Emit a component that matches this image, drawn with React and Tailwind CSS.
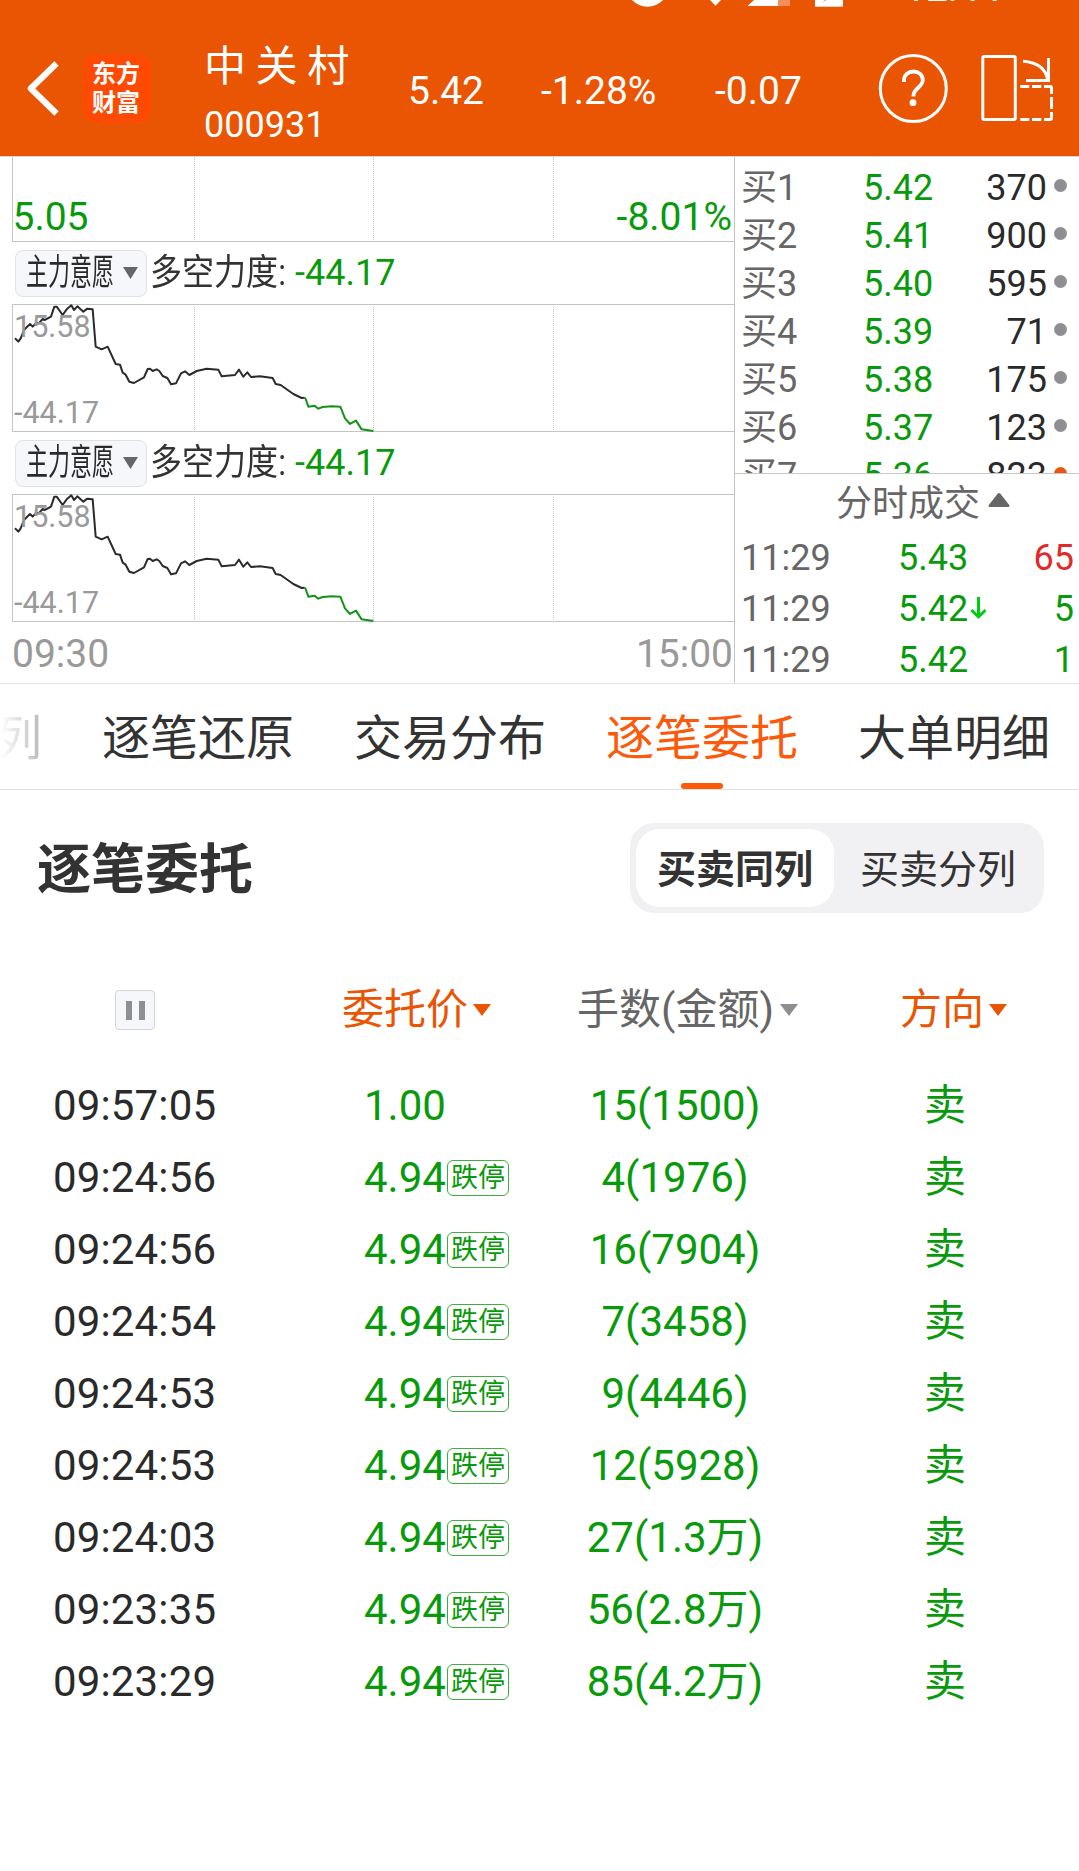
import React from "react";

const bids = [
  ["买1", "5.42", "370"],
  ["买2", "5.41", "900"],
  ["买3", "5.40", "595"],
  ["买4", "5.39", "71"],
  ["买5", "5.38", "175"],
  ["买6", "5.37", "123"],
  ["买7", "5.36", "823", true],
];

const ticks = [
  { time: "11:29", price: "5.43", vol: "65", up: true },
  { time: "11:29", price: "5.42", vol: "5", arrow: true },
  { time: "11:29", price: "5.42", vol: "1" },
];

const orders = [
  ["09:57:05", "1.00", "15(1500)", false],
  ["09:24:56", "4.94", "4(1976)", true],
  ["09:24:56", "4.94", "16(7904)", true],
  ["09:24:54", "4.94", "7(3458)", true],
  ["09:24:53", "4.94", "9(4446)", true],
  ["09:24:53", "4.94", "12(5928)", true],
  ["09:24:03", "4.94", "27(1.3万)", true],
  ["09:23:35", "4.94", "56(2.8万)", true],
  ["09:23:29", "4.94", "85(4.2万)", true],
];

const darkLine =
  "45,565 55,575 62,565 72,540 80,532 90,522 98,530 108,520 118,518 128,507 135,510 153,500 163,470 170,470 188,495 200,478 214,466 222,480 232,469 250,485 262,476 278,478 287,590 305,598 323,590 347,642 360,644 368,668 377,674 388,695 402,699 432,682 443,657 450,656 458,663 470,658 478,663 488,678 502,684 513,703 528,700 543,670 555,664 568,675 590,663 620,656 655,659 665,679 705,675 717,659 730,680 742,667 753,681 780,679 818,684 827,702 842,705 880,732 905,744 914,743";
const greenLine =
  "914,743 917,747 925,770 944,767 955,776 968,771 995,769 1021,770 1035,805 1050,822 1068,812 1085,838 1120,843";

function GridLines({ height, from }) {
  return [182.5, 361.5, 541.5].map((x) => (
    <line key={x} x1={x} x2={x} y1={from} y2={height - 1} stroke="#c4c4c4" strokeWidth="1" strokeDasharray="1 1" />
  ));
}

function StatusBar() {
  return (
    <div className="relative h-[8px] shrink-0 overflow-hidden">
      <svg className="block" width="1079" height="8" viewBox="0 0 1079 8" fill="#fff">
        <circle cx="647.5" cy="-15" r="21.7" />
        <path d="M710 0h11l-5.500 5.700z" />
        <path d="M754 0h24v6h-30.500z" />
        <path d="M778 0h12v6h-12z" opacity=".35" />
        <path d="M815 0h28v6.700h-28z" />
        <path d="M822 2l3-2h1.500z" fill="#ea5504" />
      </svg>
      <span className="absolute left-[904px] top-[-36px] text-[39px] leading-[48px] text-white">12:44</span>
    </div>
  );
}

function Header() {
  return (
    <header className="flex h-[156px] flex-col bg-[#ea5504] text-white">
      <StatusBar />
      <div className="flex h-[148px] items-start">
        <svg className="ml-[24px] mt-[50px] shrink-0" width="38" height="62" viewBox="0 0 38 62" fill="none" stroke="#fff" strokeWidth="6.200" strokeLinejoin="round">
          <path d="M32.500 5.500L6.800 30.500l25.700 25" />
        </svg>
        <div className="ml-[21px] mt-[46px] flex h-[69px] w-[68px] shrink-0 flex-col items-center justify-center rounded-[14px] bg-[#ff4a03] pr-[2px] text-[24px] font-bold leading-[29px]">
          <span>东方</span>
          <span>财富</span>
        </div>
        <div className="ml-[53px] mt-[32px] w-[204px] shrink-0">
          <div className="whitespace-pre text-[42px] leading-[54px] [word-spacing:-0.8px]">中 关 村</div>
          <div className="mt-[7px] text-[36px] leading-[48px]">000931</div>
        </div>
        <div className="mt-[59px] flex shrink-0 text-[39px] leading-[48px]">
          <span className="w-[133px]">5.42</span>
          <span className="w-[174px]">-1.28%</span>
          <span className="w-[162px]">-0.07</span>
        </div>
        <svg className="mt-[45px] shrink-0" width="72" height="72" viewBox="877 53 72 72" fill="none" stroke="#fff">
          <circle cx="913.300" cy="88.500" r="33" strokeWidth="3" />
          <path d="M904 82v-1.500c0-5.500 4.200-9 9.500-9s9.300 3.500 9.300 8.500c0 7-9.300 8.500-9.300 15.500v1" strokeWidth="3.800" />
          <circle cx="913" cy="102.700" r="3.400" fill="#fff" stroke="none" />
        </svg>
        <svg className="ml-[31px] mt-[45px] shrink-0" width="76" height="72" viewBox="981 53 76 72" fill="none" stroke="#fff" strokeWidth="3">
          <rect x="983.800" y="56.500" width="32.500" height="63" rx="1.500" />
          <path d="M1021.300 86.500h9M1033 86.500h9.300M1045 86.500h6q1.500 0 1.500 1.500v6M1052.500 97v12M1052.500 112v6q0 1.500-1.500 1.500h-6M1042.300 119.500h-9.300M1030.300 119.500h-9" />
          <path d="M1024 61.200c14 1 23.500 7.500 24.500 19M1049.500 58v23.800M1027 80.500h24" />
        </svg>
      </div>
    </header>
  );
}

function Indicator() {
  return (
    <>
      <div className="flex h-[62px] items-center">
        <div className="ml-[3px] flex h-[47px] w-[132px] shrink-0 items-center rounded-[8px] border border-[#e0e2e6] bg-[#f6f7fa]">
          <span className="ml-[10px] w-[89px] origin-left scale-x-[0.61] whitespace-nowrap text-[36px] leading-[46px] text-[#2a2a2a]">主力意愿</span>
          <svg className="ml-[8px]" width="15" height="12" viewBox="0 0 15 12" fill="#666">
            <path d="M0 0h15L7.500 12z" />
          </svg>
        </div>
        <span className="ml-[3px] w-[144px] shrink-0 origin-left scale-x-[0.89] whitespace-nowrap text-[36px] leading-[46px] text-[#333]">多空力度:</span>
        <span className="ml-[1px] text-[36px] leading-[46px] text-[#099a0c]">-44.17</span>
      </div>
      <div className="relative h-[128px]">
        <svg className="block overflow-visible" width="722" height="128" viewBox="0 0 722 128" fill="none">
          <path d="M722 .5H.5v127H722" stroke="#c4c4c4" />
          <GridLines height={128} from={3} />
          <g transform="translate(-12 -154) scale(.33333)" strokeWidth="6" strokeLinejoin="round">
            <polyline points={darkLine} stroke="#2b2b2b" />
            <polyline points={greenLine} stroke="#15911a" />
          </g>
        </svg>
        <span className="absolute left-[2px] top-[4px] text-[30.5px] leading-[38px] text-[#999]">15.58</span>
        <span className="absolute left-[2px] top-[90px] text-[30.5px] leading-[38px] text-[#999]">-44.17</span>
      </div>
    </>
  );
}

function ChartPanel() {
  return (
    <div className="w-[734px] shrink-0 pl-[12px]">
      <div className="relative h-[85px]">
        <svg className="block" width="722" height="85" viewBox="0 0 722 85" fill="none">
          <path d="M.5 0v84.500H722" stroke="#c4c4c4" />
          <GridLines height={85} from={0} />
        </svg>
        <div className="absolute inset-x-0 top-[36px] flex justify-between pl-[0.5px] pr-[2px] text-[39px] leading-[48px] text-[#099a0c]">
          <span>5.05</span>
          <span>-8.01%</span>
        </div>
      </div>
      <Indicator />
      <Indicator />
      <div className="flex h-[61px] justify-between pr-[1px] pt-[8px] text-[39px] leading-[48px] text-[#999]">
        <span>09:30</span>
        <span>15:00</span>
      </div>
    </div>
  );
}

function QuotePanel() {
  return (
    <div className="flex-1 border-l border-[#c4c4c4] text-[36px]">
      <div className="h-[317px] overflow-hidden border-b border-[#c8c8c8] pt-[7px]">
        {bids.map(([name, price, vol, hot]) => (
          <div key={name} className="flex h-[48px] items-center leading-[48px]">
            <span className="ml-[6px] w-[122px] text-[#666]">{name}</span>
            <span className="w-[90px] text-[#099a0c]">{price}</span>
            <span className="w-[94px] text-right text-[#2a2a2a]">{vol}</span>
            <span className={hot ? "mb-[6px] ml-[7px] size-[13px] rounded-full bg-[#e8560f]" : "mb-[6px] ml-[7px] size-[13px] rounded-full bg-[#8e8e93]"} />
          </div>
        ))}
      </div>
      <div className="flex h-[58px] items-center pl-[101px] leading-[58px] text-[#666]">
        <span className="pt-[2px]">分时成交</span>
        <svg className="mb-[7px] ml-[8px]" width="22" height="14" viewBox="0 0 22 14" fill="#666">
          <path d="M9.800 .6q1.200-1.200 2.400 0L21.200 12q.8 2-1 2H1.800q-1.800 0-1-2z" />
        </svg>
      </div>
      <div className="pt-[1px]">
        {ticks.map((t, i) => (
          <div key={i} className="flex h-[51px] items-center leading-[51px] text-[#099a0c]">
            <span className="ml-[6px] w-[157px] text-[#666]">{t.time}</span>
            <span className="w-[72px]">{t.price}</span>
            <span className="w-[17px]">
              {t.arrow && (
                <svg className="mb-[4px]" width="17" height="24" viewBox="0 0 17 24" fill="none" stroke="#00cc10" strokeWidth="3">
                  <path d="M8.500 1v20M1.500 14l7 7 7-7" />
                </svg>
              )}
            </span>
            <span className={t.up ? "w-[87px] text-right text-[#e02b2b]" : "w-[87px] text-right"}>{t.vol}</span>
          </div>
        ))}
      </div>
    </div>
  );
}

function Tabs() {
  return (
    <nav className="flex h-[106px] justify-end gap-[60px] overflow-hidden border-b border-[#e2e2e2] pr-[29px] text-[48px] leading-[110px] text-[#333]">
      <span className="shrink-0 bg-linear-to-r from-[#fff] from-15% to-[#b8b8b8] bg-clip-text text-transparent">列</span>
      <span className="shrink-0">逐笔还原</span>
      <span className="shrink-0">交易分布</span>
      <span className="relative shrink-0 text-[#fc5a0a]">
        逐笔委托
        <i className="absolute bottom-0 left-[75px] h-[6px] w-[42px] rounded-[3px] bg-[#fc5a0a]" />
      </span>
      <span className="shrink-0">大单明细</span>
    </nav>
  );
}

function Caret({ className }) {
  return (
    <svg className={className} width="18" height="12" viewBox="0 0 18 12" fill="currentColor">
      <path d="M0 0h18L9 12z" />
    </svg>
  );
}

export default function App() {
  return (
    <div className="h-[1871px] w-[1079px] overflow-hidden bg-white font-['Roboto','Noto_Sans_CJK_SC',sans-serif]">
      <Header />
      <section className="flex h-[528px] border-b border-t border-b-[#e2e2e2] border-t-[#d8d8d8]">
        <ChartPanel />
        <QuotePanel />
      </section>
      <Tabs />
      <div className="flex h-[156px] items-center justify-between pl-[37px] pr-[35px] text-[#333]">
        <h1 className="pt-[6px] text-[54px] font-bold leading-[64px]">逐笔委托</h1>
        <div className="flex h-[90px] w-[414px] rounded-[24px] bg-[#f1f1f4] p-[6px] text-center text-[39px] leading-[82px]">
          <span className="h-[78px] w-[198px] rounded-[24px] bg-white font-bold">买卖同列</span>
          <span className="flex-1 pl-[4px]">买卖分列</span>
        </div>
      </div>
      <div className="mt-[28px] flex h-[72px] items-center text-[42px] leading-[76px] text-[#ea5504]">
        <div className="ml-[115px] flex size-[40px] items-center justify-center gap-[7px] rounded-[4px] border border-[#d2d5da] bg-[#f6f7fa]">
          <i className="h-[19px] w-[6px] bg-[#8e8e93]" />
          <i className="h-[19px] w-[6px] bg-[#8e8e93]" />
        </div>
        <div className="ml-[187px] flex w-[235px] items-center">
          委托价
          <Caret className="mb-px ml-[5px]" />
        </div>
        <div className="flex w-[323px] items-center text-[#666]">
          手数(金额)
          <Caret className="mb-px ml-[6px] text-[#8e8e93]" />
        </div>
        <div className="flex items-center">
          方向
          <Caret className="mb-px ml-[5px]" />
        </div>
      </div>
      <div className="mt-[24px]">
        {orders.map(([time, price, amount, limit], i) => (
          <div key={i} className="flex h-[72px] items-center text-[42px] leading-[72px] text-[#099a0c]">
            <span className="ml-[53px] w-[311px] shrink-0 tracking-[0.15px] text-[#2a2a2a]">{time}</span>
            <span className="w-[83px] shrink-0">{price}</span>
            <span className="w-[108px] shrink-0">
              {limit && (
                <span className="flex h-[36px] w-[62px] items-center justify-center rounded-[6px] border border-[#3fae42] text-[27px] leading-[36px]">
                  跌停
                </span>
              )}
            </span>
            <span className="w-[240px] shrink-0 text-center">{amount}</span>
            <span className="w-[284px] shrink-0 pl-[16px] text-center">卖</span>
          </div>
        ))}
      </div>
    </div>
  );
}
